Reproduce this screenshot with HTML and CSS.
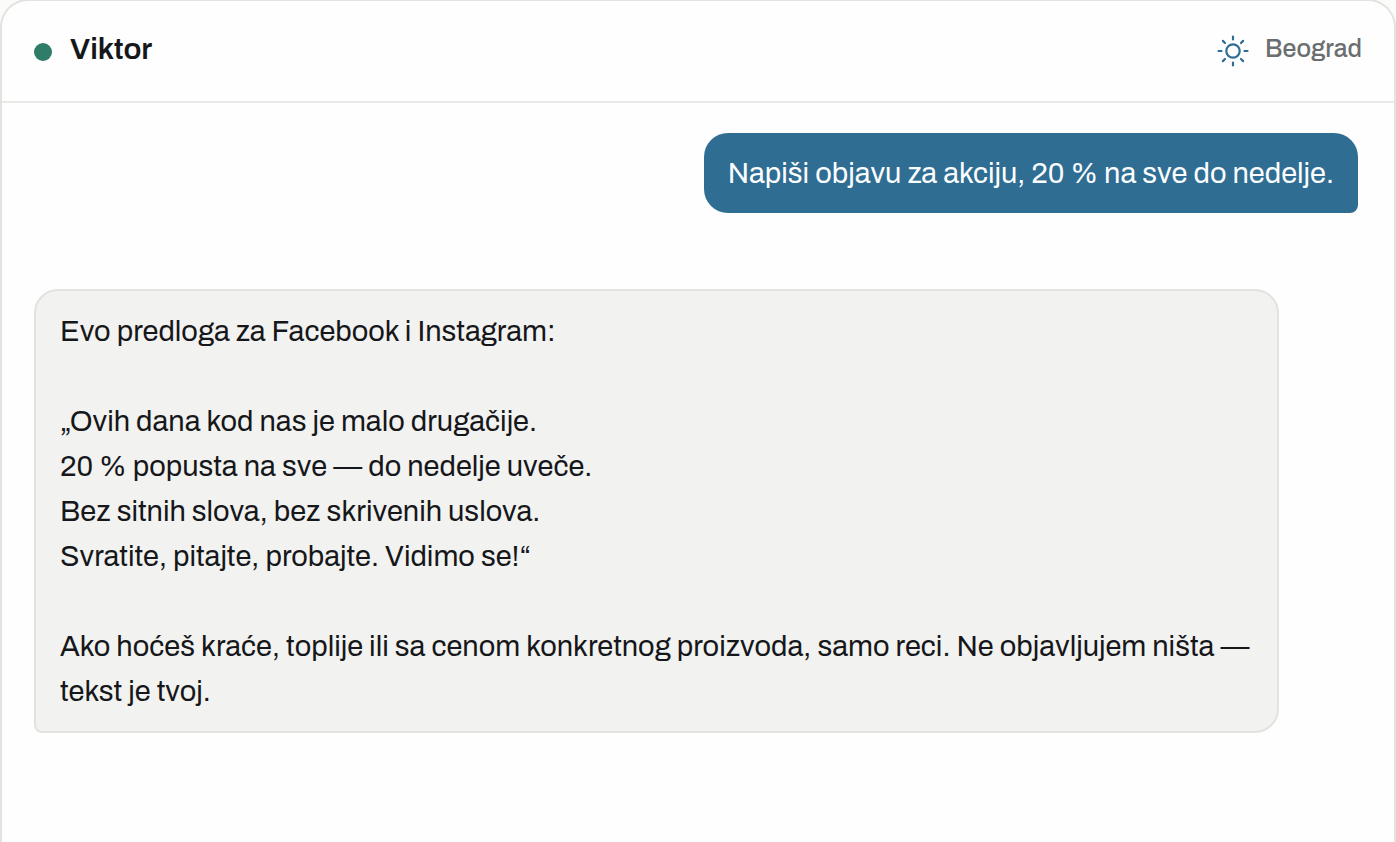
FILE: index.html
```html
<!DOCTYPE html>
<html lang="sr-Latn">
<head>
<meta charset="utf-8">
<meta name="viewport" content="width=device-width, initial-scale=1">
<title>Viktor</title>
<link rel="stylesheet" href="styles.css">
</head>
<body>
<main class="chat">
  <header class="chat-header">
    <span class="status-dot"></span>
    <h1 class="name">Viktor</h1>
    <div class="place">
      <svg class="sun" viewBox="0 0 32 32" aria-hidden="true">
        <circle cx="16" cy="16" r="6.7"/>
        <path d="M16 1.5v3M16 27.5v3M1.5 16h3M27.5 16h3M5.9 5.9l2.1 2.1M24 24l2.1 2.1M5.9 26.1l2.1-2.1M24 8l2.1-2.1"/>
      </svg>
      <span class="city">Beograd</span>
    </div>
  </header>
  <section class="messages">
    <p class="bubble bubble-user">Napiši objavu za akciju, 20 % na sve do nedelje.</p>
    <p class="bubble bubble-reply">Evo predloga za Facebook i Instagram:

„Ovih dana kod nas je malo drugačije.
20 % popusta na sve — do nedelje uveče.
Bez sitnih slova, bez skrivenih uslova.
Svratite, pitajte, probajte. Vidimo se!“

Ako hoćeš kraće, toplije ili sa cenom konkretnog proizvoda, samo reci. Ne objavljujem ništa — tekst je tvoj.</p>
  </section>
</main>
</body>
</html>
```
FILE: styles.css
```css
* {
  box-sizing: border-box;
}

body {
  margin: 0;
  background: #fbfbfa;
  color: #16171a;
  font-family: Archivo, "Liberation Sans", Arial, sans-serif;
}

.chat {
  display: flex;
  flex-direction: column;
  min-height: calc(100vh + 1px);
  margin-top: -1px;
  border: 2px solid #e2e2de;
  border-bottom: 0;
  border-radius: 28px 28px 0 0;
  background: #fefefe;
}

.chat-header {
  display: flex;
  align-items: center;
  padding: 30px 32px;
  border-bottom: 2px solid #e9e9e6;
}

.status-dot {
  width: 18px;
  height: 18px;
  margin-top: 2px;
  border-radius: 50%;
  background: #2f7d68;
}

.name {
  margin: 0 0 0 18px;
  padding-bottom: 4px;
  font-size: 30px;
  font-weight: 600;
  line-height: 36px;
}

.place {
  display: flex;
  align-items: center;
  gap: 16px;
  margin-left: auto;
  color: #6b6e70;
}

.sun {
  width: 32px;
  height: 32px;
  fill: none;
  stroke: #2f6d93;
  stroke-width: 2.2;
  stroke-linecap: round;
}

.city {
  padding-bottom: 4px;
  font-size: 25px;
  font-weight: 500;
  line-height: 36px;
}

.messages {
  display: flex;
  flex-direction: column;
  gap: 76px;
  padding: 30px 36px 30px 32px;
}

.bubble {
  margin: 0;
  padding: 18px 24px 17px;
  font-size: 29px;
  line-height: 45px;
}

.bubble-user {
  align-self: flex-end;
  border-radius: 24px 24px 8px 24px;
  background: #2f6d93;
  color: #fbfdfe;
}

.bubble-reply {
  align-self: flex-start;
  max-width: 94%;
  border: 2px solid #e2e2de;
  border-radius: 24px 24px 24px 8px;
  background: #f2f2f0;
  white-space: pre-line;
}
```
